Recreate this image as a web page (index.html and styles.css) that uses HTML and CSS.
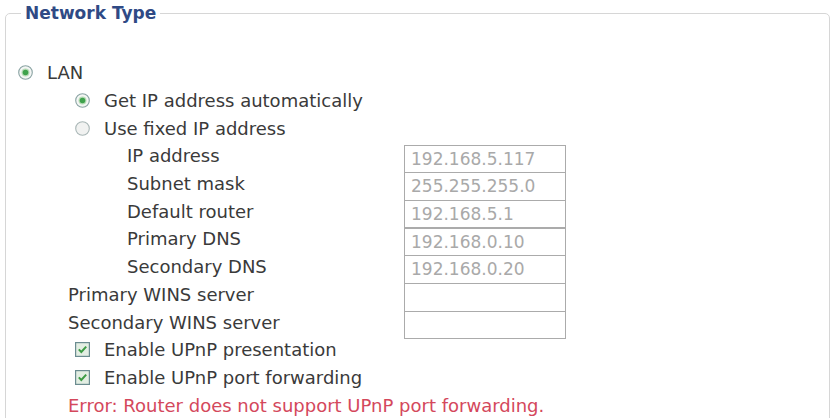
FILE: index.html
```html
<!DOCTYPE html>
<html>
<head>
<meta charset="utf-8">
<title>Network Type</title>
<link rel="stylesheet" href="styles.css">
</head>
<body>
<div class="page">
  <fieldset class="group">
    <legend class="group-title">Network Type</legend>
    <div class="rows">
      <div class="row lvl0">
        <svg class="radio" viewBox="0 0 15 15"><circle cx="7.5" cy="7.5" r="6.8" fill="#f4f6f4" stroke="#8aa3a3" stroke-width="1.1"/><circle cx="7.5" cy="7.5" r="4" fill="#b8dcb8"/><circle cx="7.5" cy="7.5" r="2.8" fill="#3fa24c"/></svg>
        <span class="text">LAN</span>
      </div>
      <div class="row lvl1">
        <svg class="radio" viewBox="0 0 15 15"><circle cx="7.5" cy="7.5" r="6.8" fill="#f4f6f4" stroke="#8aa3a3" stroke-width="1.1"/><circle cx="7.5" cy="7.5" r="4" fill="#b8dcb8"/><circle cx="7.5" cy="7.5" r="2.8" fill="#3fa24c"/></svg>
        <span class="text">Get IP address automatically</span>
      </div>
      <div class="row lvl1">
        <svg class="radio" viewBox="0 0 15 15"><circle cx="7.5" cy="7.5" r="6.8" fill="#f1f2f1" stroke="#a9b6b6" stroke-width="1.1"/></svg>
        <span class="text">Use fixed IP address</span>
      </div>
      <div class="row lvl2">
        <span class="label label-l2">IP address</span>
        <span class="field">192.168.5.117</span>
      </div>
      <div class="row lvl2">
        <span class="label label-l2">Subnet mask</span>
        <span class="field">255.255.255.0</span>
      </div>
      <div class="row lvl2">
        <span class="label label-l2">Default router</span>
        <span class="field">192.168.5.1</span>
      </div>
      <div class="row lvl2">
        <span class="label label-l2">Primary DNS</span>
        <span class="field">192.168.0.10</span>
      </div>
      <div class="row lvl2">
        <span class="label label-l2">Secondary DNS</span>
        <span class="field">192.168.0.20</span>
      </div>
      <div class="row wins">
        <span class="label label-w">Primary WINS server</span>
        <span class="field"></span>
      </div>
      <div class="row wins">
        <span class="label label-w">Secondary WINS server</span>
        <span class="field"></span>
      </div>
      <div class="row chk">
        <svg class="check" viewBox="0 0 15 15"><rect x="0.6" y="0.6" width="13.8" height="13.8" fill="#e3eee3" stroke="#6b8c90" stroke-width="1.2"/><path d="M3.8 7.4 L6.3 10 L11.2 4.6" fill="none" stroke="#3c9c44" stroke-width="2"/></svg>
        <span class="text">Enable UPnP presentation</span>
      </div>
      <div class="row chk">
        <svg class="check" viewBox="0 0 15 15"><rect x="0.6" y="0.6" width="13.8" height="13.8" fill="#e3eee3" stroke="#6b8c90" stroke-width="1.2"/><path d="M3.8 7.4 L6.3 10 L11.2 4.6" fill="none" stroke="#3c9c44" stroke-width="2"/></svg>
        <span class="text">Enable UPnP port forwarding</span>
      </div>
      <div class="row err">
        <span class="error">Error: Router does not support UPnP port forwarding.</span>
      </div>
    </div>
  </fieldset>
</div>
</body>
</html>
```

FILE: styles.css
```css
html, body {
  margin: 0;
  padding: 0;
  background: #ffffff;
}

body {
  font-family: "DejaVu Sans", Verdana, sans-serif;
  font-size: 18px;
  color: #3a3a3a;
}

.page {
  padding: 2px 1px 0 5px;
}

.group {
  margin: 0;
  padding: 0 0 30px 0;
  border: 1px solid #d6d6d6;
  border-radius: 5px;
  min-width: 0;
}

.group-title {
  margin-left: 15px;
  padding: 0 4px;
  font-size: 17px;
  font-weight: bold;
  line-height: 22px;
  color: #2f4a85;
}

.rows {
  padding-top: 35px;
}

.row {
  display: flex;
  align-items: center;
  height: 27.7px;
  white-space: nowrap;
}

.lvl0 { padding-left: 12px; }
.lvl1 { padding-left: 69px; }
.lvl2 { padding-left: 121px; }
.wins { padding-left: 62px; }
.chk  { padding-left: 69px; }
.err  { padding-left: 62px; }

.radio,
.check {
  flex: 0 0 15px;
  width: 15px;
  height: 15px;
  margin-right: 14px;
}

.label-l2 { flex: 0 0 277px; }
.label-w  { flex: 0 0 336px; }

.field {
  box-sizing: border-box;
  flex: 0 0 162px;
  height: 28.4px;
  margin-top: 6px;
  padding: 0 6px;
  border: 1px solid #ababab;
  background: #ffffff;
  color: #a9a9a9;
  font-size: 17px;
  line-height: 26px;
}

.error {
  color: #d4485c;
}
```
